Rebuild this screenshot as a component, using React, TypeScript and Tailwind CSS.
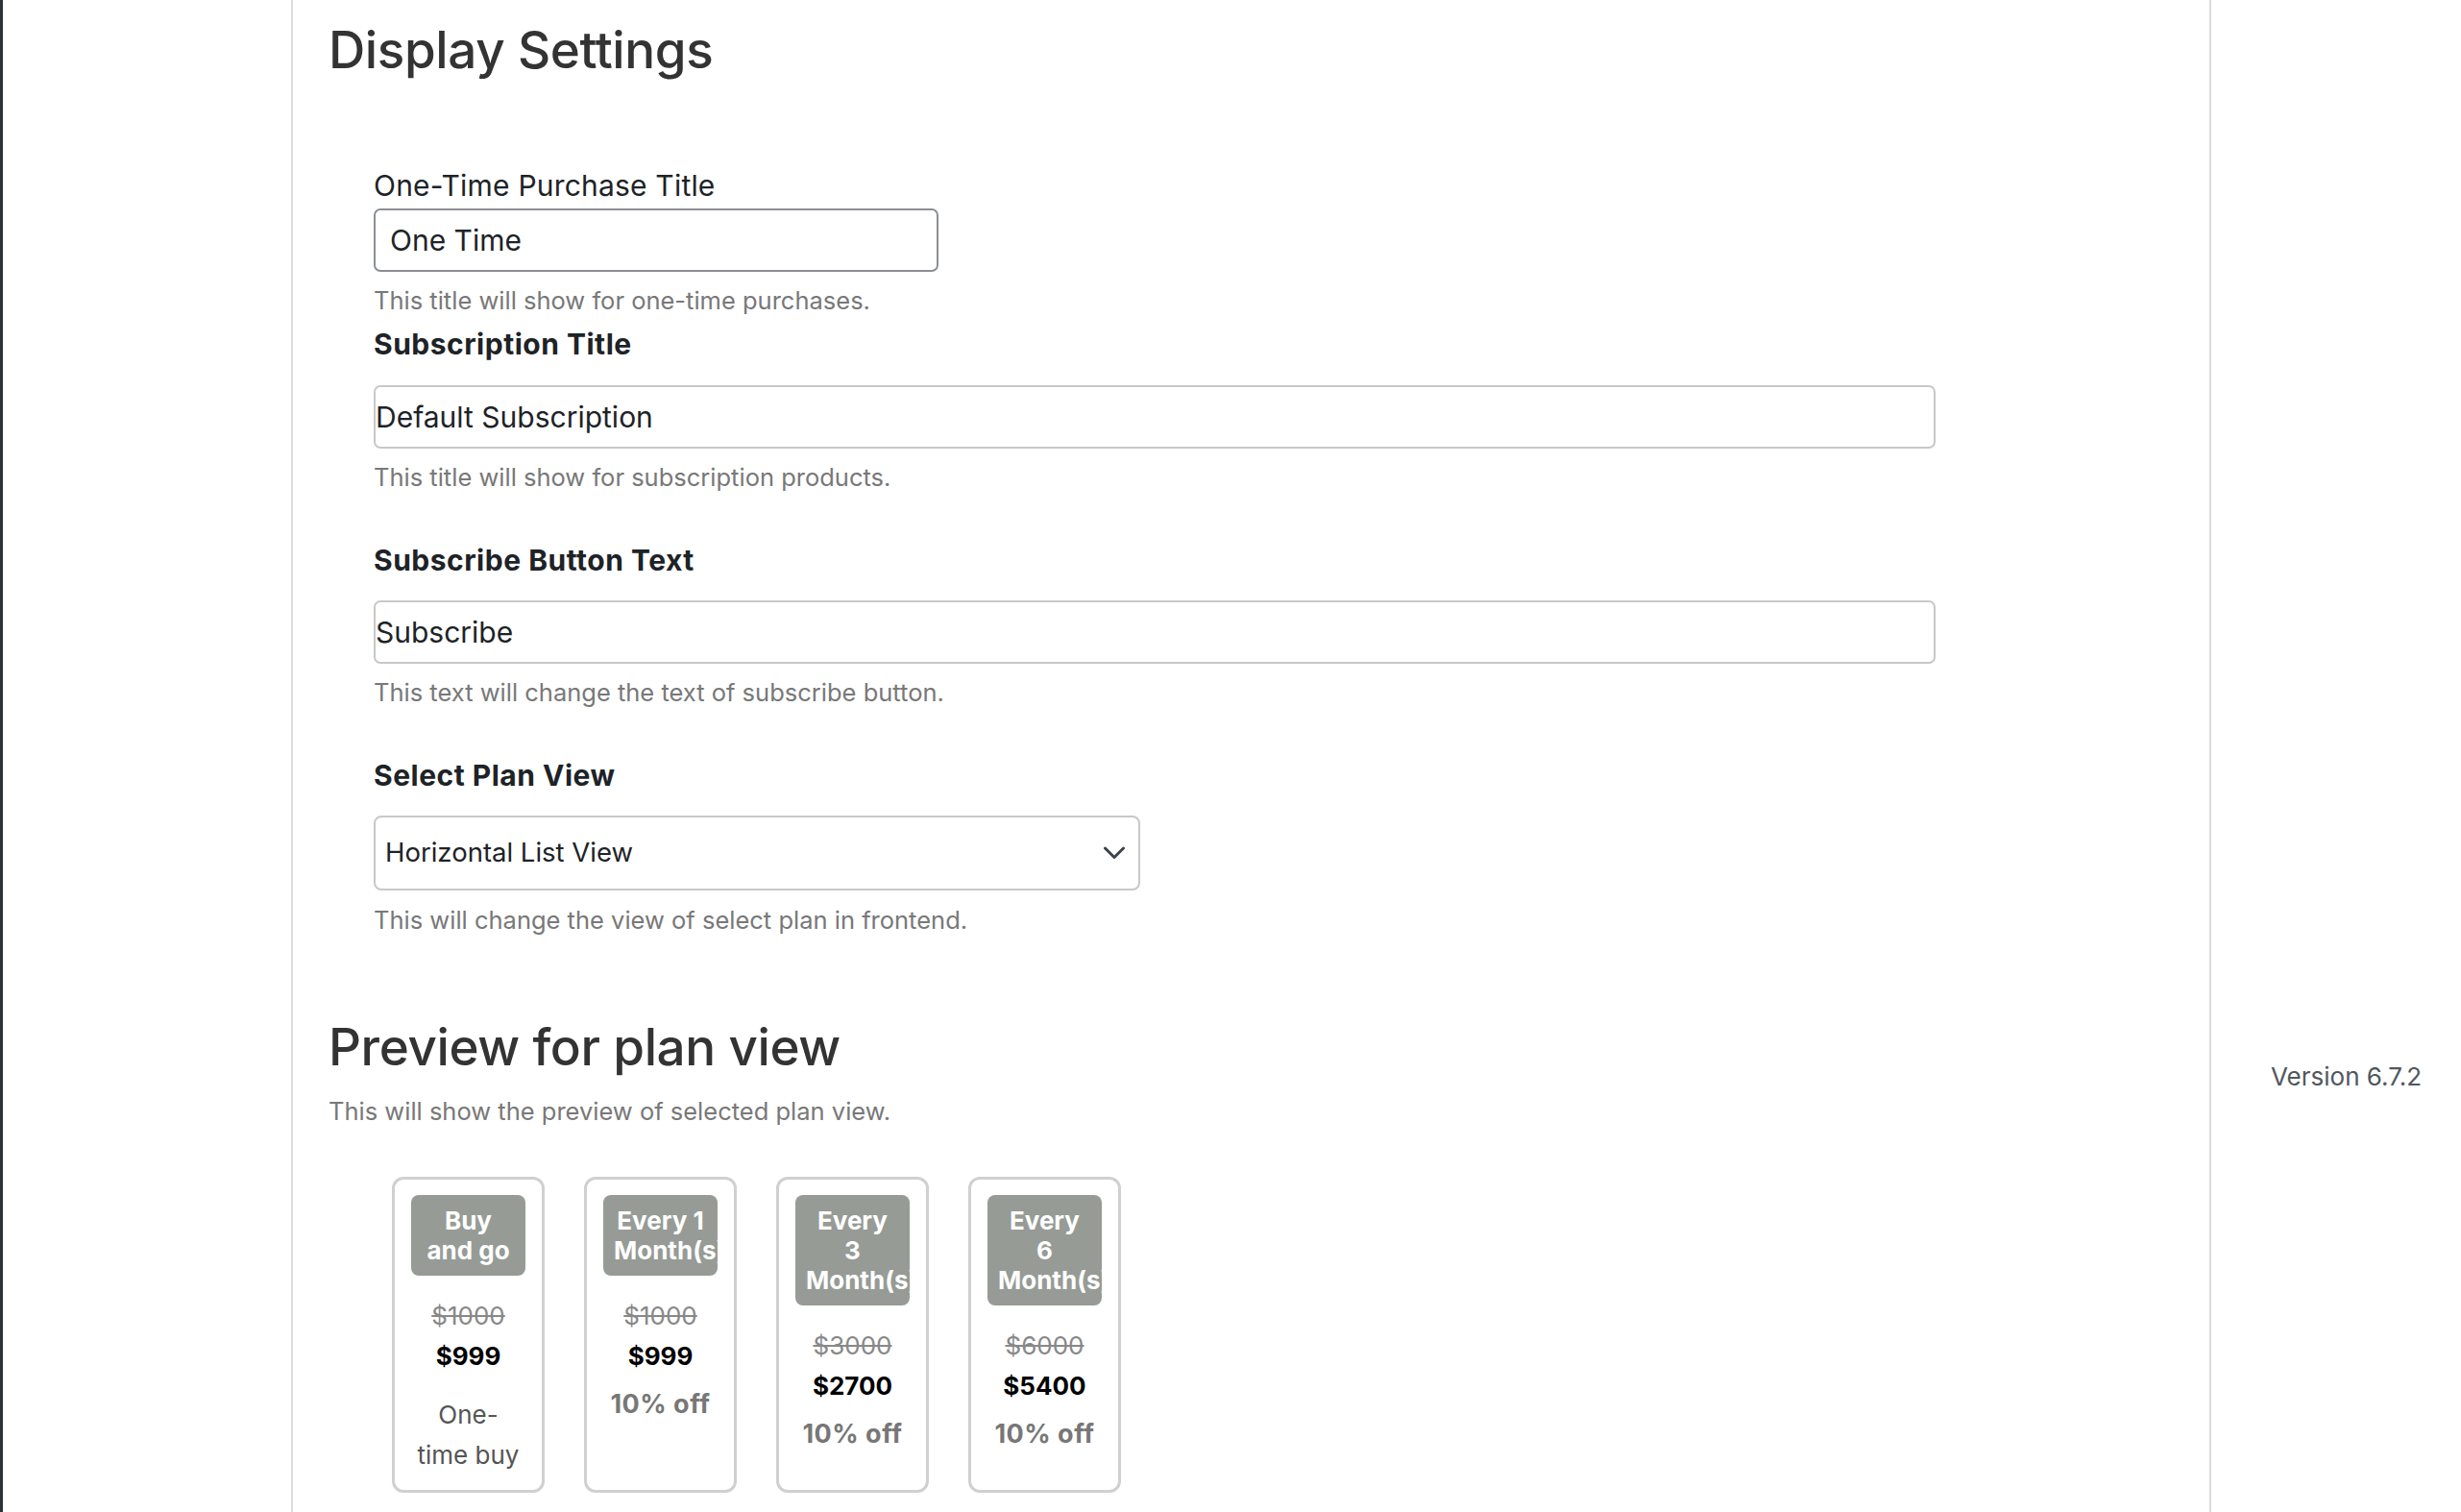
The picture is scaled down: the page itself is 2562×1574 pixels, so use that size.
import React from "react";

type Plan = {
  lines: string[];
  old: string;
  price: string;
  oneTime?: boolean;
};

const plans: Plan[] = [
  { lines: ["Buy", "and go"], old: "$1000", price: "$999", oneTime: true },
  { lines: ["Every 1", "Month(s)"], old: "$1000", price: "$999" },
  { lines: ["Every", "3", "Month(s)"], old: "$3000", price: "$2700" },
  { lines: ["Every", "6", "Month(s)"], old: "$6000", price: "$5400" },
];

function Help({ children, className = "" }: { children: React.ReactNode; className?: string }) {
  return <p className={`text-[25.5px] leading-[34px] text-[#787878] ${className}`}>{children}</p>;
}

function PlanCard({ plan }: { plan: Plan }) {
  return (
    <div className="w-[159px] shrink-0 rounded-[12px] border-[3px] border-[#d0d0d0] px-[17px] pt-[16px] pb-[15px] text-center">
      <div className="overflow-hidden rounded-[8px] bg-[#969b96] p-[11px] text-[26px] leading-[31px] font-bold text-white">
        {plan.lines.map((l) => (
          <div key={l} className="whitespace-nowrap">
            {l}
          </div>
        ))}
      </div>
      <div className="mt-[21px] text-[26px] leading-[42px] text-[#888888] line-through">{plan.old}</div>
      <div className="text-[26px] leading-[42px] font-bold text-black">{plan.price}</div>
      {plan.oneTime ? (
        <div className="mt-[19px] text-[26px] leading-[42px] text-[#555555]">
          <div>One-</div>
          <div className="whitespace-nowrap">time buy</div>
        </div>
      ) : (
        <div className="mt-[8px] text-[27px] leading-[42px] font-bold tracking-[0.5px] text-[#777777]">10% off</div>
      )}
    </div>
  );
}

export default function App() {
  return (
    <div className="flex h-[1574px] w-[2562px] overflow-hidden bg-white font-[Inter,'Noto_Sans',sans-serif] text-[#1d2327]">
      <div className="w-[3px] shrink-0 bg-[#2c3338]" />
      <div className="w-[300px] shrink-0" />
      <main className="w-[1999px] shrink-0 border-x-2 border-[#dcdcde] pl-[37px]">
        <h1 className="mt-[19px] text-[53px] leading-[66px] font-medium tracking-[-0.4px] text-[#333333]">Display Settings</h1>

        <div className="pl-[47px]">
          <label className="mt-[90px] block text-[30px] leading-[36px] tracking-[0.2px] text-[#1d2327]">One-Time Purchase Title</label>
          <input
            readOnly
            defaultValue="One Time"
            className="mt-[6px] block h-[66px] w-[588px] rounded-[7px] border-2 border-[#8c8f94] bg-white pl-[15px] text-[30px] text-[#1d2327] outline-none"
          />
          <Help className="mt-[13px]">This title will show for one-time purchases.</Help>

          <label className="mt-[10px] block text-[30px] leading-[36px] font-bold tracking-[0.5px] text-[#1d2327]">Subscription Title</label>
          <input
            readOnly
            defaultValue="Default Subscription"
            className="mt-[25px] block h-[66px] w-[1626px] rounded-[7px] border-2 border-[#c8c8c8] bg-white text-[30px] text-[#1d2327] outline-none"
          />
          <Help className="mt-[13px]">This title will show for subscription products.</Help>

          <label className="mt-[51px] block text-[30px] leading-[36px] font-bold tracking-[0.5px] text-[#1d2327]">Subscribe Button Text</label>
          <input
            readOnly
            defaultValue="Subscribe"
            className="mt-[24px] block h-[66px] w-[1626px] rounded-[7px] border-2 border-[#c8c8c8] bg-white text-[30px] text-[#1d2327] outline-none"
          />
          <Help className="mt-[13px]">This text will change the text of subscribe button.</Help>

          <label className="mt-[51px] block text-[30px] leading-[36px] font-bold tracking-[0.5px] text-[#1d2327]">Select Plan View</label>
          <div className="mt-[24px] flex h-[78px] w-[798px] items-center justify-between rounded-[8px] border-2 border-[#c8c8c8] bg-white pl-[10px] pr-[14px]">
            <span className="text-[27.5px] text-[#1d2327]">Horizontal List View</span>
            <svg width="22" height="14" viewBox="0 0 22 14" fill="none">
              <path d="M1.5 2L11 11.5L20.5 2" stroke="#3c434a" strokeWidth="3" strokeLinecap="round" strokeLinejoin="round" />
            </svg>
          </div>
          <Help className="mt-[14px]">This will change the view of select plan in frontend.</Help>
        </div>

        <h2 className="mt-[82px] text-[53px] leading-[66px] font-medium tracking-[-0.4px] text-[#333333]">Preview for plan view</h2>
        <Help className="mt-[17px]">This will show the preview of selected plan view.</Help>

        <div className="mt-[51px] ml-[66px] flex items-stretch gap-[41px]">
          {plans.map((p) => (
            <PlanCard key={p.old + p.lines.join()} plan={p} />
          ))}
        </div>
      </main>
      <div className="flex-1 pt-[1104px] pr-[41px] text-right text-[26px] leading-[34px] text-[#50575e]">
        Version 6.7.2
      </div>
    </div>
  );
}
